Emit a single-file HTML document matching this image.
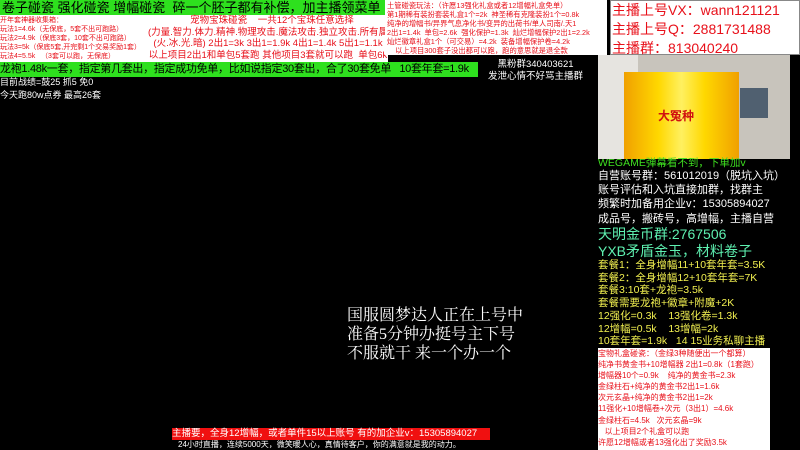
<!DOCTYPE html>
<html><head><meta charset="utf-8"><style>
body{margin:0;width:800px;height:450px;background:#000;position:relative;overflow:hidden;font-family:"Liberation Sans","Noto Sans CJK SC",sans-serif}
div{position:absolute;white-space:nowrap}
.r{color:#e8101a}
</style></head><body>
<div style="left:0;top:0;width:388px;height:15px;background:#2ee01e;color:#000;font-size:13px;line-height:15px;padding-left:2px">卷子碰瓷 强化碰瓷 增幅碰瓷&nbsp; 碎一个胚子都有补偿，加主播领菜单</div>
<div style="left:0;top:15px;width:388px;height:47px;background:#fff"></div>
<div class="r" style="left:0;top:16px;font-size:7px;line-height:9px">开年套神器收集箱：<br>玩法1=4.6k（无保底，5套不出可跑路）<br>玩法2=4.9k（保底3套，10套不出可跑路）<br>玩法3=5k（保底5套,开完剩1个交易奖励1套）<br>玩法4=5.5k&nbsp;&nbsp;&nbsp;（3套可以跑，无保底）</div>
<div class="r" style="left:148px;top:15px;font-size:9.5px;line-height:11.7px;text-align:center;width:240px">&nbsp;&nbsp;&nbsp;宠物宝珠碰瓷&nbsp;&nbsp;&nbsp; 一共12个宝珠任意选择<br>(力量.智力.体力.精神.物理攻击.魔法攻击.独立攻击.所有属性<br>(火.冰.光.暗) 2出1=3k 3出1=1.9k 4出1=1.4k 5出1=1.1k<br>以上项目2出1和单包5套跑 其他项目3套就可以跑&nbsp; 单包6k</div>
<div style="left:385px;top:0;width:222px;height:55px;background:#fff"></div>
<div class="r" style="left:387px;top:1px;font-size:7.3px;line-height:9px">土管碰瓷玩法：（许愿13强化礼盒或者12增幅礼盒免单）<br>第1期稀有装扮套装礼盒1个=2k&nbsp; 神圣稀有克隆装扮1个=0.8k<br>纯净的增幅书/异界气息净化书/变异的出荷书/单人司南/.天1<br>2出1=1.4k&nbsp; 单包=2.6k&nbsp; 强化保护=1.3k&nbsp; 灿烂增幅保护2出1=2.2k<br>灿烂徽章礼盒1个（可交易）=4.2k&nbsp; 装备增幅保护卷=4.2k<br>&nbsp;&nbsp;&nbsp;&nbsp;以上项目300套子没出都可以跑，跑的意思就是退全款</div>
<div style="left:610px;top:0;width:188px;height:53px;background:#fff;border:1px solid #888"></div>
<div class="r" style="left:612px;top:1px;font-size:14px;line-height:19px">主播上号VX：wann121121<br>主播上号Q：2881731488<br>主播群：813040240</div>
<div style="left:0;top:62px;width:478px;height:15px;background:#2ee01e;color:#000;font-size:11px;line-height:15px;letter-spacing:-0.3px">龙袍1.48k一套，指定第几套出，指定成功免单，比如说指定30套出，合了30套免单&nbsp;&nbsp; 10套年套=1.9k</div>
<div style="left:0;top:76px;color:#fff;font-size:9px;line-height:13px">目前战绩=鼓25 抓5 免0<br>今天跑80w点券 最高26套</div>
<div style="left:488px;top:59px;color:#fff;font-size:9.5px;line-height:12px;text-align:center">黑粉群340403621<br>发泄心情不好骂主播群</div>
<div style="left:598px;top:55px;width:192px;height:104px;background:#c8c4bc"></div>
<div style="left:598px;top:55px;width:40px;height:104px;background:#e6e4e0"></div>
<div style="left:740px;top:88px;width:28px;height:30px;background:#506070"></div>
<div style="left:624px;top:72px;width:115px;height:87px;background:linear-gradient(90deg,#f0a000,#ffd800 30%,#fff060 50%,#ffd800 70%,#f0a000)"></div>
<div style="left:658px;top:107px;color:#d01010;font-size:12px;font-weight:bold;font-family:'Noto Sans CJK SC'">大冤种</div>
<div style="left:598px;top:157px;color:#3ee020;font-size:10.5px;line-height:12px">WEGAME弹幕看不到，下单加v</div>
<div style="left:598px;top:169px;color:#fff;font-size:11px;line-height:14.2px">自营账号群：561012019（脱坑入坑）<br>账号评估和入坑直接加群，找群主<br>频繁时加备用企业v：15305894027<br>成品号，搬砖号，高增幅，主播自营</div>
<div style="left:598px;top:226px;color:#5ef0b0;font-size:14px;line-height:17px">天明金币群:2767506<br>YXB矛盾金玉，材料卷子</div>
<div style="left:598px;top:259px;color:#f2f050;font-size:10.5px;line-height:12.7px">套餐1：全身增幅11+10套年套=3.5K<br>套餐2：全身增幅12+10套年套=7K<br>套餐3:10套+龙袍=3.5k<br>套餐需要龙袍+徽章+附魔+2K<br>12强化=0.3k&nbsp;&nbsp;&nbsp; 13强化卷=1.3k<br>12增幅=0.5k&nbsp;&nbsp;&nbsp; 13增幅=2k<br>10套年套=1.9k&nbsp;&nbsp; 14 15业务私聊主播</div>
<div style="left:598px;top:348px;width:172px;height:102px;background:#fff"></div>
<div class="r" style="left:598px;top:348px;font-size:8px;line-height:11.1px">宝物礼盒碰瓷：（金绿3种随便出一个都算）<br>纯净书黄金书+10增幅器 2出1=0.8k（1套跑）<br>增幅器10个=0.9k&nbsp;&nbsp;&nbsp; 纯净的黄金书=2.3k<br>金绿柱石+纯净的黄金书2出1=1.6k<br>次元玄晶+纯净的黄金书2出1=2k<br>11强化+10增幅卷+次元（3出1）=4.6k<br>金绿柱石=4.5k&nbsp;&nbsp; 次元玄晶=9k<br>&nbsp;&nbsp;&nbsp;以上项目2个礼盒可以跑<br>许愿12增幅或者13强化出了奖励3.5k</div>
<div style="left:347px;top:306px;color:#fff;font-size:16px;line-height:19px;font-family:'Liberation Serif','Noto Serif CJK SC',serif">国服圆梦达人正在上号中<br>准备5分钟办挺号主下号<br>不服就干 来一个办一个</div>
<div style="left:172px;top:428px;width:318px;height:12px;background:#f01010;color:#fff;font-size:9.5px;line-height:12px">主播要，全身12增幅，或者单件15以上账号 有的加企业v：15305894027</div>
<div style="left:178px;top:440px;color:#fff;font-size:8px;line-height:10px">24小时直播，连续5000天，微笑暖人心，真情待客户，你的满意就是我的动力。</div>
</body></html>
